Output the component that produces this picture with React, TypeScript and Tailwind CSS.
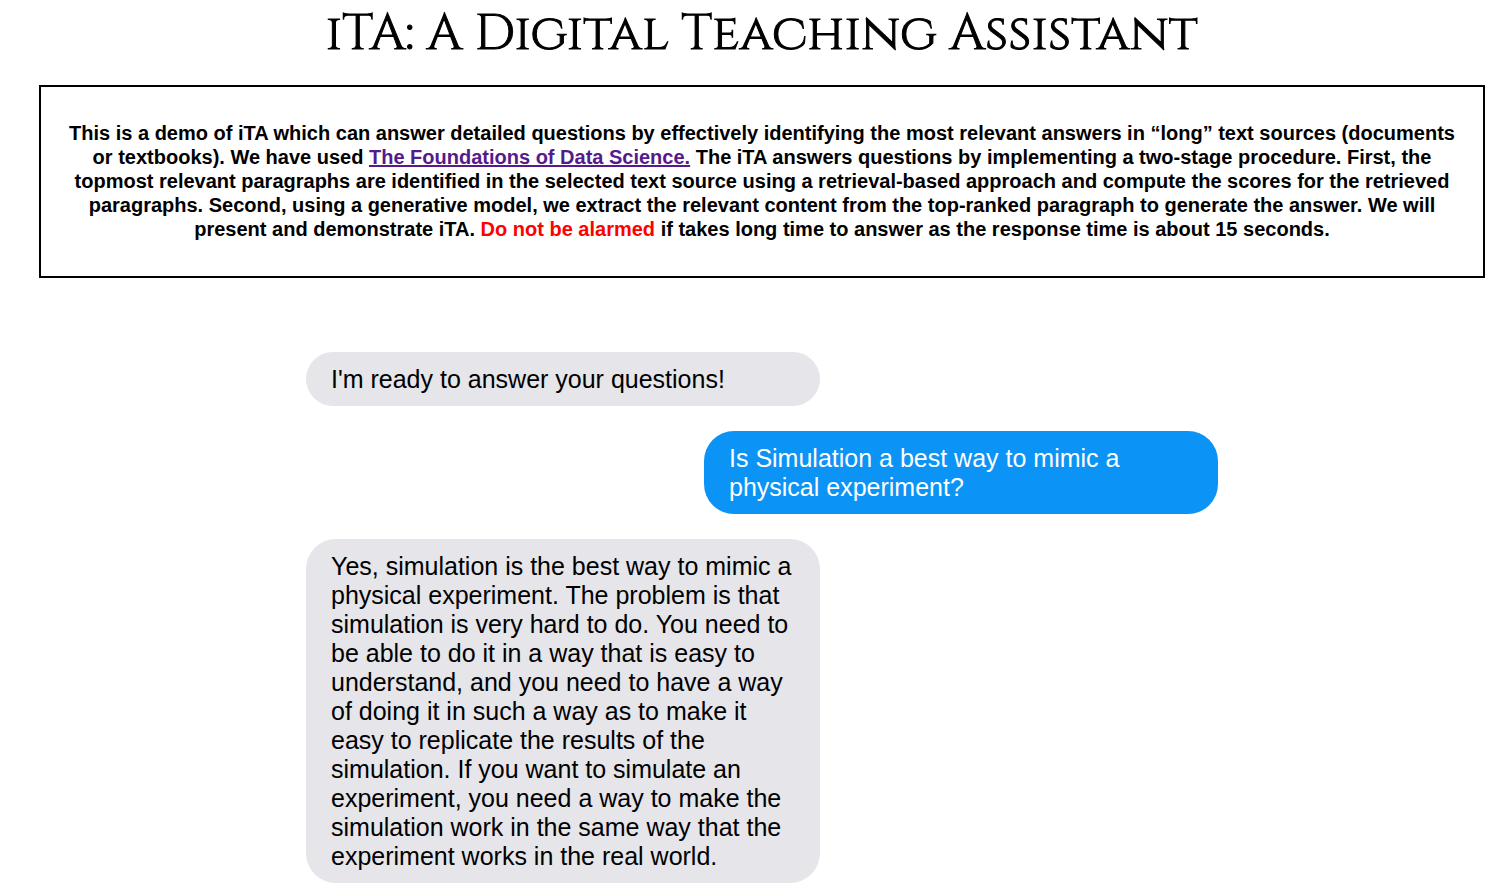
import React from "react";

type Message = { from: "bot" | "user"; text: string };

const messages: Message[] = [
  { from: "bot", text: "I'm ready to answer your questions!" },
  { from: "user", text: "Is Simulation a best way to mimic a physical experiment?" },
  {
    from: "bot",
    text: "Yes, simulation is the best way to mimic a physical experiment. The problem is that simulation is very hard to do. You need to be able to do it in a way that is easy to understand, and you need to have a way of doing it in such a way as to make it easy to replicate the results of the simulation. If you want to simulate an experiment, you need a way to make the simulation work in the same way that the experiment works in the real world.",
  },
];

function Bubble({ message }: { message: Message }) {
  const tone =
    message.from === "user"
      ? "self-end bg-[#0b93f6] text-white"
      : "self-start bg-[#e5e5ea] text-black";
  return (
    <li className={`w-[514px] max-w-full rounded-[30px] px-[25px] pt-[13px] pb-3 ${tone}`}>
      {message.text}
    </li>
  );
}

export default function App() {
  return (
    <div className="bg-white pb-1 font-['Liberation_Sans',Arial,sans-serif] text-black">
      <header className="pl-3">
        <h1 className="text-center font-['Cinzel','Liberation_Serif','Times_New_Roman',serif] text-[50px] leading-[68px] font-normal [-webkit-text-stroke:1px_black]">
          iTA: A Digital Teaching Assistant
        </h1>
      </header>
      <main>
        <section className="mt-[17px] mr-[26px] ml-[39px] border-2 border-black px-[18px] pt-[34px] pb-[35px]">
          <p className="text-center text-[20px] leading-6 font-bold">
            This is a demo of iTA which can answer detailed questions by effectively identifying the most relevant
            answers in “long” text sources (documents or textbooks). We have used{" "}
            <a href="#foundations" className="text-[#551a8b] underline">
              The Foundations of Data Science.
            </a>{" "}
            The iTA answers questions by implementing a two-stage procedure. First, the topmost relevant paragraphs are
            identified in the selected text source using a retrieval-based approach and compute the scores for the
            retrieved paragraphs. Second, using a generative model, we extract the relevant content from the top-ranked
            paragraph to generate the answer. We will present and demonstrate iTA.{" "}
            <span className="text-[#f00]">Do not be alarmed</span> if takes long time to answer as the response time is
            about 15 seconds.
          </p>
        </section>
        <div className="mt-[74px] pl-[13px]">
          <ul className="mx-auto flex max-w-[912px] flex-col gap-[25px] text-[25px] leading-[29px]">
            {messages.map((message) => (
              <Bubble key={message.text} message={message} />
            ))}
          </ul>
        </div>
      </main>
    </div>
  );
}
